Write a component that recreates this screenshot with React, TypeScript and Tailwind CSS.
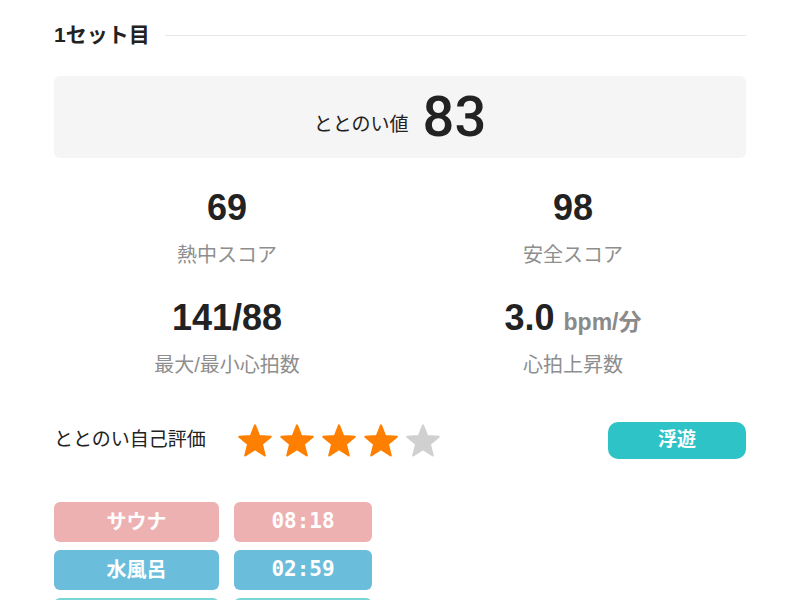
const font = { fontFamily: '"Liberation Sans", "Noto Sans CJK JP", sans-serif' };

function StarIcon({ on }: { on: boolean }) {
  const c = on ? "#ff7f00" : "#d0d0d0";
  return (
    <svg width="36" height="36" viewBox="0 0 24 24">
      <path
        d="M12 1.6 L14.82 8.72 L22.5 9.2 L16.56 14.08 L18.5 21.6 L12 17.4 L5.5 21.6 L7.44 14.08 L1.5 9.2 L9.18 8.72 Z"
        fill={c}
        stroke={c}
        strokeWidth="1.4"
        strokeLinejoin="round"
      />
    </svg>
  );
}

function Stat({ value, unit, label }: { value: string; unit?: string; label: string }) {
  return (
    <div className="flex flex-col items-center">
      <div className="flex items-baseline gap-[9px] h-[44px]">
        <span className="text-[36px] leading-[44px] font-bold text-[#222]">{value}</span>
        {unit && <span className="text-[23px] leading-[44px] font-semibold text-[#8a8a8a]">{unit}</span>}
      </div>
      <div className="mt-[11px] text-[20px] leading-[28px] text-[#8e8e8e]">{label}</div>
    </div>
  );
}

export default function App() {
  const rating = 4;
  const rows = [
    { name: "サウナ", time: "08:18", color: "bg-[#eeb1b2]" },
    { name: "水風呂", time: "02:59", color: "bg-[#6bbedb]" },
  ];

  return (
    <div className="w-[800px] h-[600px] overflow-hidden bg-white px-[54px] pt-[21px]" style={font}>
      {/* Section header */}
      <div className="flex items-center gap-[15px]">
        <h2 className="text-[21px] leading-[28px] font-bold text-[#222]">1セット目</h2>
        <div className="flex-1 h-px bg-[#e8e8e8]"></div>
      </div>

      {/* Totonoi value */}
      <div className="mt-[27px] h-[82px] rounded-md bg-[#f5f5f5] flex items-center justify-center gap-[14px]">
        <span className="text-[19px] leading-none text-[#222] mt-[14px]">ととのい値</span>
        <span className="text-[56px] font-medium text-[#222] leading-none" style={{ fontFamily: "Roboto, sans-serif" }}>
          83
        </span>
      </div>

      {/* Stats */}
      <div className="grid grid-cols-2 gap-y-[27px] mt-[28px]">
        <Stat value="69" label="熱中スコア" />
        <Stat value="98" label="安全スコア" />
        <Stat value="141/88" label="最大/最小心拍数" />
        <Stat value="3.0" unit="bpm/分" label="心拍上昇数" />
      </div>

      {/* Self evaluation */}
      <div className="flex items-center mt-[43px] h-[37px]">
        <span className="text-[19px] text-[#222] w-[183px]">ととのい自己評価</span>
        <div className="flex gap-[6px]">
          {[1, 2, 3, 4, 5].map(i => (
            <StarIcon key={i} on={i <= rating} />
          ))}
        </div>
        <span className="ml-auto w-[138px] h-[37px] rounded-[10px] bg-[#2ec3c7] text-white font-bold text-[19px] flex items-center justify-center">
          浮遊
        </span>
      </div>

      {/* Timings */}
      <div className="mt-[43px] flex flex-col gap-[8px]">
        {rows.map(r => (
          <div key={r.name} className="flex gap-[15px]">
            <div className={`w-[165px] h-[40px] rounded-md ${r.color} text-white text-[20px] font-semibold flex items-center justify-center`}>
              {r.name}
            </div>
            <div
              className={`w-[138px] h-[40px] rounded-md ${r.color} text-white text-[21px] font-bold flex items-center justify-center`}
              style={{ fontFamily: '"DejaVu Sans Mono", monospace' }}
            >
              {r.time}
            </div>
          </div>
        ))}
        <div className="flex gap-[15px]">
          <div className="w-[165px] h-[40px] rounded-md bg-[#78d6d4]"></div>
          <div className="w-[138px] h-[40px] rounded-md bg-[#78d6d4]"></div>
        </div>
      </div>
    </div>
  );
}
